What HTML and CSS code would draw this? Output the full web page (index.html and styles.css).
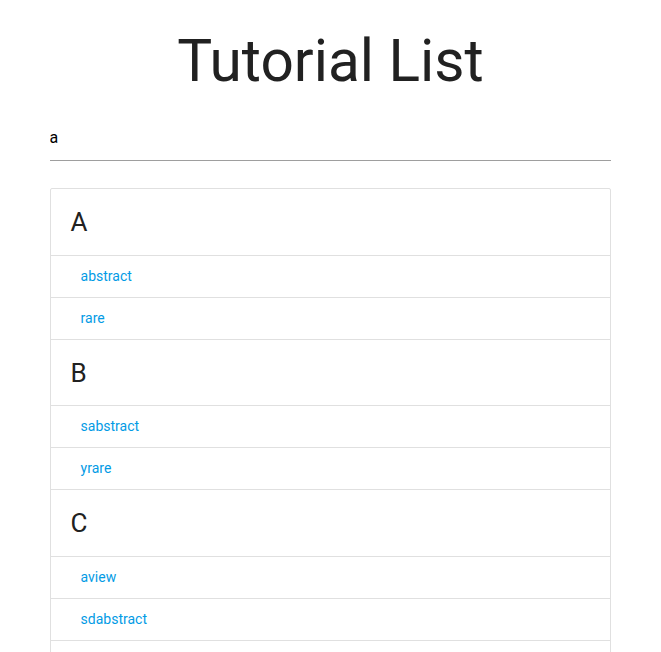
FILE: index.html
```html
<!DOCTYPE html>
<html>
<head>
<meta charset="utf-8">
<title>Tutorial List</title>
<link rel="stylesheet" href="styles.css">
</head>
<body>
<div class="container">
  <h1 class="title">Tutorial List</h1>
  <div class="input-field">
    <input type="text" class="search" value="a">
  </div>
  <ul class="collection">
    <li class="collection-header"><h4>A</h4></li>
    <li class="collection-item"><a href="#">abstract</a></li>
    <li class="collection-item"><a href="#">rare</a></li>
    <li class="collection-header"><h4>B</h4></li>
    <li class="collection-item"><a href="#">sabstract</a></li>
    <li class="collection-item"><a href="#">yrare</a></li>
    <li class="collection-header"><h4>C</h4></li>
    <li class="collection-item"><a href="#">aview</a></li>
    <li class="collection-item"><a href="#">sdabstract</a></li>
    <li class="collection-item"><a href="#">zview</a></li>
  </ul>
</div>
</body>
</html>
```
FILE: styles.css
```css
html, body {
  margin: 0;
  padding: 0;
  background: #fff;
  font-family: Roboto, "Liberation Sans", sans-serif;
  color: rgba(0, 0, 0, 0.87);
}
.container {
  width: 85%;
  margin: 0 auto;
}
.title {
  font-size: 58.6px;
  font-weight: 400;
  line-height: 66px;
  text-align: center;
  margin: 28px 0 18px;
  color: #212121;
}
.input-field {
  margin: 0 0 27px;
}
.search {
  display: block;
  box-sizing: content-box;
  width: 100%;
  height: 45px;
  padding: 3px 0 0;
  margin: 0;
  border: none;
  border-bottom: 1px solid #9e9e9e;
  outline: none;
  font-family: Roboto, "Liberation Sans", sans-serif;
  font-size: 16px;
  color: #000;
  background: transparent;
}
.collection {
  list-style: none;
  margin: 0;
  padding: 0;
  border: 1px solid #e0e0e0;
  border-radius: 2px;
}
.collection-header {
  padding: 11px 20px 9px;
  border-bottom: 1px solid #e0e0e0;
}
.collection-header h4 {
  margin: 0;
  font-size: 26px;
  font-weight: 400;
  line-height: 45.5px;
  color: #212121;
}
.collection-item {
  padding: 10px 20px 10px 30px;
  font-size: 14px;
  line-height: 21px;
  border-bottom: 1px solid #e0e0e0;
}
.collection-item a {
  color: #039be5;
  text-decoration: none;
}
```
